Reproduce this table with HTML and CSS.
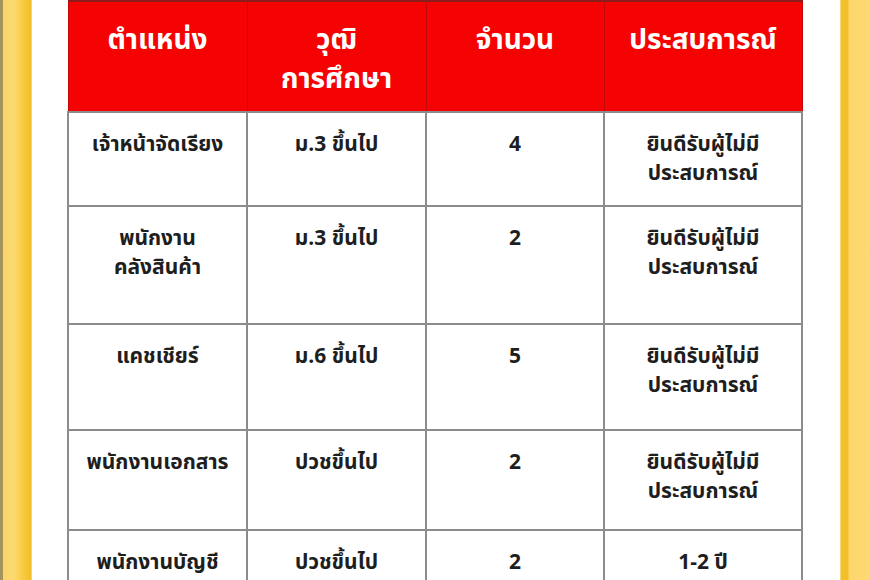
FILE: index.html
```html
<!DOCTYPE html>
<html lang="th">
<head>
<meta charset="utf-8">
<link rel="stylesheet" href="styles.css">
</head>
<body>
<div class="page">
  <div class="frame frame-left"></div>
  <main class="content">
    <table class="jobs">
      <colgroup>
        <col class="c1"><col class="c2"><col class="c3"><col class="c4">
      </colgroup>
      <thead>
        <tr class="head">
          <th>ตำแหน่ง</th>
          <th>วุฒิ<br>การศึกษา</th>
          <th>จำนวน</th>
          <th>ประสบการณ์</th>
        </tr>
      </thead>
      <tbody>
        <tr class="r1">
          <td>เจ้าหน้าจัดเรียง</td>
          <td>ม.3 ขึ้นไป</td>
          <td>4</td>
          <td>ยินดีรับผู้ไม่มี<br>ประสบการณ์</td>
        </tr>
        <tr class="r2">
          <td>พนักงาน<br>คลังสินค้า</td>
          <td>ม.3 ขึ้นไป</td>
          <td>2</td>
          <td>ยินดีรับผู้ไม่มี<br>ประสบการณ์</td>
        </tr>
        <tr class="r3">
          <td>แคชเชียร์</td>
          <td>ม.6 ขึ้นไป</td>
          <td>5</td>
          <td>ยินดีรับผู้ไม่มี<br>ประสบการณ์</td>
        </tr>
        <tr class="r4">
          <td>พนักงานเอกสาร</td>
          <td>ปวชขึ้นไป</td>
          <td>2</td>
          <td>ยินดีรับผู้ไม่มี<br>ประสบการณ์</td>
        </tr>
        <tr class="r5">
          <td>พนักงานบัญชี</td>
          <td>ปวชขึ้นไป</td>
          <td>2</td>
          <td>1-2 ปี</td>
        </tr>
      </tbody>
    </table>
  </main>
  <div class="frame frame-right"></div>
</div>
</body>
</html>
```
FILE: styles.css
```css
html, body {
  margin: 0;
  padding: 0;
  background: #ffffff;
}
body {
  font-family: "Noto Sans Thai", "Noto Sans", "DejaVu Sans", sans-serif;
}
.page {
  display: flex;
  width: 870px;
  height: 580px;
  overflow: hidden;
}
.frame {
  flex: 0 0 auto;
}
.frame-left {
  width: 32px;
  background: linear-gradient(to right, #a3935c 0, #a3935c 3px, #fbd46a 3px, #fcda72 14px, #f8cc44 22px, #f2bf2a 31px, #f7e7b8 32px);
}
.frame-right {
  width: 30px;
  background: linear-gradient(to right, #fbeec4 0, #f3c02c 1px, #f3bf28 8px, #fcd76a 9px, #fdd972 30px);
}
.content {
  flex: 1 1 auto;
  padding-left: 35px;
}
.jobs {
  width: 734px;
  border-collapse: collapse;
  table-layout: fixed;
}
.c1 { width: 179px; }
.c2 { width: 179px; }
.c3 { width: 178px; }
.c4 { width: 198px; }
.jobs th,
.jobs td {
  vertical-align: top;
  text-align: center;
  font-weight: 700;
  padding: 0;
}
.jobs th {
  background: #f50303;
  color: #ffffff;
  font-size: 28px;
  line-height: 39px;
  padding-top: 19px;
  border: 1.5px solid #c30606;
  border-top: 2px solid #8e1b1b;
  height: 90px;
}
.jobs td {
  color: #1e1e1e;
  font-size: 21px;
  line-height: 29px;
  padding-top: 17px;
  border: 2px solid #8c8c8c;
}
.r1 td { height: 75px; }
.r2 td { height: 99px; }
.r3 td { height: 87px; }
.r4 td { height: 81px; }
.r5 td { height: 80px; }
```
